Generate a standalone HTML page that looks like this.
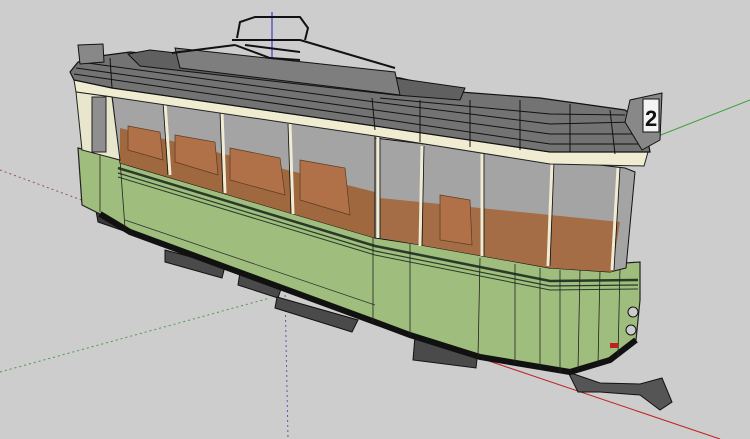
<!DOCTYPE html>
<html><head><meta charset="utf-8"><style>
html,body{margin:0;padding:0;background:#cdcdcd;}
svg{display:block}
</style></head><body>
<svg width="750" height="439" viewBox="0 0 750 439" xmlns="http://www.w3.org/2000/svg">
<rect width="750" height="439" fill="#cdcdcd"/>
<!-- axes -->
<line x1="0" y1="170" x2="95" y2="205" stroke="#a05050" stroke-width="1" stroke-dasharray="2,3"/>
<line x1="0" y1="372" x2="270" y2="298" stroke="#4a9a4a" stroke-width="1" stroke-dasharray="2,3"/>
<line x1="285" y1="290" x2="288" y2="439" stroke="#5a5ab0" stroke-width="1" stroke-dasharray="2,3"/>
<line x1="272" y1="12" x2="272" y2="75" stroke="#2020d0" stroke-width="1"/>
<line x1="648" y1="140" x2="750" y2="100" stroke="#3aa03a" stroke-width="1"/>
<line x1="480" y1="358" x2="720" y2="439" stroke="#c02020" stroke-width="1"/>

<!-- under parts -->
<polygon points="165,250 225,266 222,278 165,262" fill="#4a4a4a" stroke="#111"/>
<polygon points="240,272 282,286 278,298 238,285" fill="#4a4a4a" stroke="#111"/>
<polygon points="277,297 358,320 352,332 275,308" fill="#4a4a4a" stroke="#111"/>
<polygon points="415,336 478,350 476,368 413,360" fill="#4a4a4a" stroke="#111"/>
<polygon points="95,205 125,212 127,232 98,222" fill="#3a3a3a" stroke="#111"/>
<!-- coupler -->
<polygon points="568,372 600,383 640,384 662,378 672,402 660,410 640,395 600,392 578,392" fill="#555" stroke="#111"/>

<!-- green body -->
<polygon points="78,148 120,160 375,236 550,268 640,262 640,300 636,340 610,360 570,372 480,357 410,335 375,322 130,232 100,214 82,205" fill="#9fbd7c" stroke="#222" stroke-width="1.2"/>
<polyline points="118,168 375,246 550,281 638,280" fill="none" stroke="#2a3a2a" stroke-width="2.5"/>
<polyline points="118,173 375,251 550,286 638,285" fill="none" stroke="#2a3a2a" stroke-width="1.2"/>
<polyline points="118,177 375,255 550,290 638,289" fill="none" stroke="#2a3a2a" stroke-width="1"/>
<polyline points="125,220 375,305" fill="none" stroke="#333" stroke-width="0.8"/>
<polyline points="100,214 130,232 375,322 410,335 480,357 570,372 610,360 636,340" fill="none" stroke="#111" stroke-width="6"/>
<g stroke="#222" stroke-width="0.8">
<line x1="373" y1="236" x2="373" y2="322"/><line x1="410" y1="244" x2="410" y2="335"/>
<line x1="480" y1="258" x2="478" y2="357"/><line x1="515" y1="264" x2="515" y2="364"/>
<line x1="540" y1="268" x2="540" y2="370"/><line x1="560" y1="270" x2="560" y2="372"/>
<line x1="580" y1="270" x2="578" y2="370"/><line x1="600" y1="270" x2="598" y2="365"/>
<line x1="620" y1="268" x2="618" y2="356"/>
<line x1="120" y1="160" x2="125" y2="228"/><line x1="100" y1="152" x2="100" y2="212"/>
</g>

<!-- windows -->
<polygon points="112,95 375,135 375,238 120,163" fill="#a4a4a4" stroke="#111"/>
<polygon points="120,128 375,192 375,238 120,163" fill="#a0683f"/>
<polygon points="375,138 625,168 635,172 626,268 610,272 550,268 415,244 375,238" fill="#a4a4a4" stroke="#111"/>
<polygon points="380,198 620,222 612,272 550,268 415,244 380,238" fill="#a46d45"/>
<g fill="#b07048" stroke="#5a3a22" stroke-width="0.7">
<polygon points="128,126 160,132 163,160 128,150"/>
<polygon points="175,135 215,142 218,175 175,162"/>
<polygon points="230,148 280,158 285,195 230,180"/>
<polygon points="300,160 345,168 350,215 300,200"/>
<polygon points="440,195 470,200 472,245 440,240"/>
</g>
<g stroke="#f0ecd4" stroke-width="3" fill="none">
<line x1="165" y1="102" x2="170" y2="175"/><line x1="222" y1="112" x2="225" y2="193"/>
<line x1="290" y1="124" x2="293" y2="214"/><line x1="378" y1="137" x2="378" y2="238"/>
<line x1="422" y1="146" x2="420" y2="246"/><line x1="482" y1="154" x2="482" y2="256"/>
<line x1="552" y1="162" x2="548" y2="266"/><line x1="618" y1="168" x2="612" y2="270"/>
</g>
<g stroke="#111" stroke-width="0.8" fill="none">
<line x1="163" y1="102" x2="168" y2="175"/><line x1="220" y1="112" x2="223" y2="193"/>
<line x1="288" y1="124" x2="291" y2="214"/><line x1="380" y1="137" x2="380" y2="238"/>
<line x1="424" y1="146" x2="422" y2="246"/><line x1="484" y1="154" x2="484" y2="256"/>
<line x1="554" y1="162" x2="550" y2="266"/><line x1="620" y1="168" x2="614" y2="270"/>
</g>
<!-- cream band & left end -->
<polygon points="74,80 112,88 375,126 550,152 648,152 644,166 550,164 375,136 112,97 76,92" fill="#efecd2" stroke="#222"/>
<polygon points="76,92 112,97 120,160 82,150" fill="#e8e6cc" stroke="#222"/>
<rect x="92" y="97" width="14" height="55" fill="#8f8f8f" stroke="#222"/>

<!-- roof -->
<polygon points="70,72 78,62 100,56 130,52 400,78 460,92 540,98 625,110 645,125 650,152 550,152 375,126 112,88 74,80" fill="#737373" stroke="#111" stroke-width="1.2"/>
<polygon points="128,54 150,50 395,78 465,88 460,100 395,95 140,66" fill="#606060" stroke="#111"/>
<polygon points="175,48 395,72 400,95 180,68" fill="#7e7e7e" stroke="#111"/>
<g stroke="#111" stroke-width="1" fill="none">
<polyline points="74,74 375,118 550,144 645,144"/>
<polyline points="76,68 375,110 550,134 642,134"/>
<polyline points="80,62 375,102 550,124 635,122"/>
<polyline points="380,98 550,114 625,115"/>
<line x1="372" y1="98" x2="375" y2="130"/><line x1="420" y1="100" x2="420" y2="142"/>
<line x1="470" y1="100" x2="470" y2="147"/><line x1="520" y1="100" x2="520" y2="150"/>
<line x1="570" y1="104" x2="570" y2="152"/><line x1="610" y1="110" x2="615" y2="154"/>
<line x1="110" y1="58" x2="112" y2="88"/>
</g>
<!-- end posts -->
<polygon points="78,45 103,44 104,62 80,64" fill="#888" stroke="#111"/>
<polygon points="630,100 662,93 660,140 642,150 625,122" fill="#888" stroke="#111"/>
<rect x="643" y="99" width="16" height="33" fill="#f4f4f4" stroke="#111"/>
<text x="645" y="126" font-family="Liberation Sans, sans-serif" font-weight="bold" font-size="22" fill="#111">2</text>
<!-- pantograph -->
<g stroke="#111" stroke-width="2" fill="none">
<polyline points="237,38 240,22 255,17 300,17 308,28 305,40"/>
<polyline points="235,45 172,53"/><polyline points="232,40 300,40"/>
<polyline points="300,40 395,68"/><polyline points="245,45 300,52"/>
<polyline points="235,45 270,58 300,60"/>
</g>
<!-- headlights -->
<circle cx="633" cy="312" r="5" fill="#ccc" stroke="#111"/>
<circle cx="631" cy="330" r="5" fill="#ccc" stroke="#111"/>
<rect x="610" y="343" width="8" height="5" fill="#c02020"/>
</svg>
</body></html>
